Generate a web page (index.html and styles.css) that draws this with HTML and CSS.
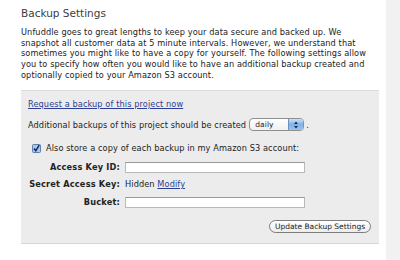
FILE: index.html
```html
<!DOCTYPE html>
<html>
<head>
<meta charset="utf-8">
<link rel="stylesheet" href="styles.css">
</head>
<body>
<div class="page">
  <main class="content">
    <h1 class="title">Backup Settings</h1>
    <p class="intro">Unfuddle goes to great lengths to keep your data secure and backed up. We<br>snapshot all customer data at 5 minute intervals. However, we understand that<br>sometimes you might like to have a copy for yourself. The following settings allow<br>you to specify how often you would like to have an additional backup created and<br>optionally copied to your Amazon S3 account.</p>
    <section class="panel">
      <a class="link" href="#">Request a backup of this project now</a>
      <div class="freq">Additional backups of this project should be created <span class="select"><span class="select-text">daily</span><span class="arrows"><svg width="8" height="10" viewBox="0 0 8 10"><path d="M2 4 L4 1.5 L6 4 Z M2 6 L4 8.5 L6 6 Z" fill="#1d2a4a"/></svg></span></span>.</div>
      <div class="check">
        <svg class="box" width="9" height="9" viewBox="0 0 9 9"><rect x="0.5" y="0.5" width="8" height="8" rx="1" fill="#a9c8ec" stroke="#5b7fae"/><path d="M2 4.5 L3.8 6.8 L7.2 1.2" fill="none" stroke="#14204a" stroke-width="1.4"/></svg>
        <span>Also store a copy of each backup in my Amazon S3 account:</span>
      </div>
      <div class="fields">
        <span class="label">Access Key ID:</span><span class="input"></span>
        <span class="label">Secret Access Key:</span><span class="value">Hidden <a class="link" href="#">Modify</a></span>
        <span class="label">Bucket:</span><span class="input"></span>
      </div>
      <div class="actions"><button class="btn" type="button">Update Backup Settings</button></div>
    </section>
  </main>
  <aside class="side"></aside>
</div>
</body>
</html>
```
FILE: styles.css
```css
html, body {
  margin: 0;
  padding: 0;
  background: #fff;
}
body {
  font-family: "DejaVu Sans", Verdana, sans-serif;
  font-size: 8.2px;
  letter-spacing: 0.1px;
  color: #222;
}
.page {
  display: flex;
  height: 260px;
  overflow: hidden;
}
.content {
  width: 358px;
  padding-left: 21px;
}
.side {
  margin-left: 7px;
  flex: 1;
  background: #f1f1f1;
}
.title {
  margin: 5px 0 0;
  font-size: 10.5px;
  font-weight: normal;
  letter-spacing: 0;
  line-height: 16px;
  color: #3c3c3c;
}
.intro {
  margin: 6px 0 0;
  line-height: 10.7px;
  white-space: nowrap;
  color: #222;
}
.panel {
  margin-top: 9px;
  background: #ececec;
  border-top: 1px solid #dcdcdc;
  border-bottom: 1px solid #d6d6d6;
  padding: 8px 8px 10px 7px;
}
.link {
  color: #2c3f96;
  text-decoration: underline;
}
.panel > .link {
  display: block;
  line-height: 11px;
}
.freq {
  margin-top: 8px;
  display: flex;
  align-items: center;
  height: 14px;
  white-space: nowrap;
}
.select {
  display: inline-flex;
  align-items: center;
  width: 55px;
  height: 13px;
  margin-left: 3px;
  margin-right: 2px;
  border: 1px solid #8f8f8f;
  border-radius: 4px;
  background: linear-gradient(#fff, #f1f1f1);
  box-sizing: border-box;
  overflow: hidden;
}
.select-text {
  flex: 1;
  padding-left: 5px;
  font-size: 7.5px;
}
.arrows {
  width: 14px;
  height: 100%;
  display: flex;
  align-items: center;
  justify-content: center;
  background: linear-gradient(#cfe2f7, #7fb0e6 50%, #9cc4f0);
  border-left: 1px solid #6b8fbf;
}
.check {
  margin-top: 11px;
  display: flex;
  align-items: center;
  height: 11px;
  padding-left: 4px;
  gap: 5px;
}
.fields {
  margin-top: 8px;
  display: grid;
  grid-template-columns: 92px 180px;
  column-gap: 5px;
  row-gap: 6.5px;
  align-items: center;
}
.label {
  text-align: right;
  font-weight: bold;
  letter-spacing: 0.2px;
  line-height: 11px;
}
.value {
  line-height: 11px;
}
.input {
  height: 11px;
  background: #fff;
  border: 1px solid #b9b9b9;
  border-top-color: #9a9a9a;
  box-sizing: border-box;
}
.actions {
  margin-top: 12px;
  display: flex;
  justify-content: flex-end;
}
.btn {
  font-family: "DejaVu Sans", Verdana, sans-serif;
  font-size: 7.5px;
  color: #222;
  height: 13px;
  width: 102px;
  padding: 0;
  border: 1px solid #7d7d7d;
  border-radius: 7px;
  background: linear-gradient(#ffffff, #ececec);
  line-height: 11px;
}
```
